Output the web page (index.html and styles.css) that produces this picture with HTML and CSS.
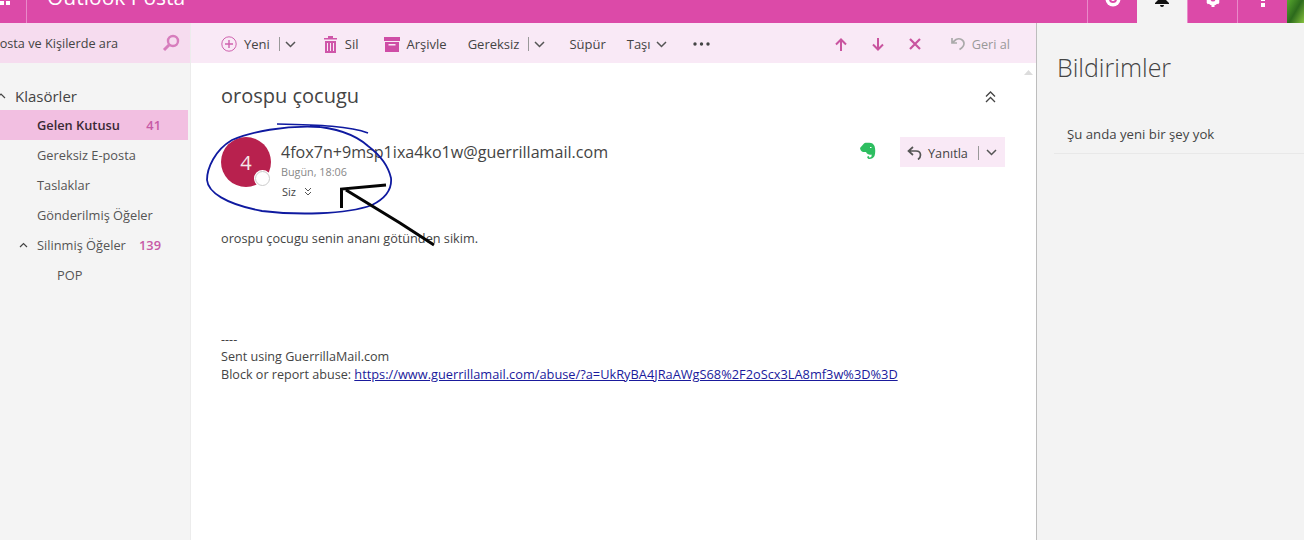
FILE: index.html
```html
<!DOCTYPE html>
<html lang="tr">
<head>
    <meta charset="UTF-8">
    <title>Outlook Posta</title>
    <link rel="stylesheet" href="styles.css">
</head>
<body>
    <div class="app">
        <header class="topbar">
            <div class="waffle"><span></span><span></span></div>
            <div class="brand">Outlook Posta</div>
            <div class="tile">
                <svg width="20" height="8" viewBox="0 0 20 8"><circle cx="10" cy="-1" r="7.500" fill="#fff"/><circle cx="10" cy="-1" r="3" fill="none" stroke="#dc4aa8" stroke-width="2"/></svg>
            </div>
            <div class="tile tile-active">
                <svg width="18" height="8" viewBox="0 0 18 8"><path d="M5-3h8v3l3 3v1H2V3l3-3zM7 5h4a2 2 0 0 1-4 0z" fill="#111"/></svg>
            </div>
            <div class="tile">
                <svg width="20" height="8" viewBox="0 0 20 8"><circle cx="10" cy="-1" r="4.500" fill="none" stroke="#fff" stroke-width="4"/><path d="M4 3l2-1M16 3l-2-1M10 4v3" stroke="#fff" stroke-width="3"/></svg>
            </div>
            <div class="tile">
                <svg width="6" height="8" viewBox="0 0 6 8"><rect x="1" y="0" width="4" height="1" fill="#fff"/><rect x="1" y="3" width="4" height="4" fill="#fff"/></svg>
            </div>
            <div class="photo"></div>
        </header>

        <div class="main">
            <aside class="sidebar">
                <div class="search">
                    <span class="search-text">Posta ve Kişilerde ara</span>
                    <svg width="20" height="20" viewBox="0 0 20 20"><circle cx="12" cy="8" r="5" fill="none" stroke="#d77dbd" stroke-width="2.400"/><path d="M8 12l-5 5" stroke="#d77dbd" stroke-width="3"/></svg>
                </div>
                <div class="folders-title">
                    <svg class="caret" width="10" height="6" viewBox="0 0 10 6"><path d="M1 5l4-4 4 4" fill="none" stroke="#444" stroke-width="1.200"/></svg>
                    Klasörler
                </div>
                <div class="folder folder-selected"><span>Gelen Kutusu</span><span class="count">41</span></div>
                <div class="folder"><span>Gereksiz E-posta</span></div>
                <div class="folder"><span>Taslaklar</span></div>
                <div class="folder"><span>Gönderilmiş Öğeler</span></div>
                <div class="folder">
                    <svg class="folder-caret" width="9" height="6" viewBox="0 0 9 6"><path d="M1 5l3.500-3.500L8 5" fill="none" stroke="#444" stroke-width="1.200"/></svg>
                    <span>Silinmiş Öğeler</span><span class="count">139</span>
                </div>
                <div class="folder folder-child"><span>POP</span></div>
            </aside>

            <section class="content">
                <nav class="toolbar">
                    <div class="tool tool-new">
                        <svg width="16" height="16" viewBox="0 0 16 16"><circle cx="8" cy="8" r="7.200" fill="none" stroke="#cf62ae" stroke-width="1"/><path d="M8 4v8M4 8h8" stroke="#cf62ae" stroke-width="1.400"/></svg>
                        <span>Yeni</span><i class="sep"></i>
                        <svg class="chev" width="11" height="7" viewBox="0 0 11 7"><path d="M1 1l4.500 4.500L10 1" fill="none" stroke="#555" stroke-width="1.500"/></svg>
                    </div>
                    <div class="tool tool-del">
                        <svg width="13" height="17" viewBox="0 0 13 17"><path d="M4 0h5v2h4v1.500H0V2h4zM1 5h11v12H1z" fill="#cf56a9"/><path d="M3.500 7v8M6.500 7v8M9.500 7v8" stroke="#f9e9f6" stroke-width="1"/></svg>
                        <span>Sil</span>
                    </div>
                    <div class="tool tool-arch">
                        <svg width="16" height="15" viewBox="0 0 16 15"><path d="M0 0h16v4H0zM1 5h14v10H1z" fill="#cf4da6"/><rect x="4.500" y="7" width="7" height="1.500" fill="#f9e9f6"/></svg>
                        <span>Arşivle</span>
                    </div>
                    <div class="tool tool-junk">
                        <span>Gereksiz</span><i class="sep"></i>
                        <svg class="chev" width="11" height="7" viewBox="0 0 11 7"><path d="M1 1l4.500 4.500L10 1" fill="none" stroke="#555" stroke-width="1.500"/></svg>
                    </div>
                    <div class="tool tool-sweep"><span>Süpür</span></div>
                    <div class="tool tool-move">
                        <span>Taşı</span>
                        <svg class="chev" width="11" height="7" viewBox="0 0 11 7"><path d="M1 1l4.500 4.500L10 1" fill="none" stroke="#555" stroke-width="1.500"/></svg>
                    </div>
                    <div class="tool tool-more">
                        <svg width="17" height="4" viewBox="0 0 17 4"><circle cx="2" cy="2" r="1.700" fill="#444"/><circle cx="8.500" cy="2" r="1.700" fill="#444"/><circle cx="15" cy="2" r="1.700" fill="#444"/></svg>
                    </div>
                    <div class="toolbar-right">
                        <svg width="12" height="13" viewBox="0 0 12 13"><path d="M6 13V2M1 6.500L6 1.500l5 5" fill="none" stroke="#c9549f" stroke-width="2"/></svg>
                        <svg width="12" height="13" viewBox="0 0 12 13"><path d="M6 0v11M1 6.500l5 5 5-5" fill="none" stroke="#c9549f" stroke-width="2"/></svg>
                        <svg width="12" height="12" viewBox="0 0 12 12"><path d="M1 1l10 10M11 1L1 11" stroke="#c9549f" stroke-width="2.200"/></svg>
                        <div class="undo">
                            <svg width="14" height="14" viewBox="0 0 14 14"><path d="M1 1v5h5M1.500 5.500L5 2.500c4-2 8 .5 8 4 0 2.500-2 4.500-4.500 6" fill="none" stroke="#aaa" stroke-width="1.700"/></svg>
                            <span>Geri al</span>
                        </div>
                    </div>
                </nav>

                <article class="message">
                    <div class="subject-row">
                        <h1 class="subject">orospu çocugu</h1>
                        <svg class="collapse" width="11" height="12" viewBox="0 0 11 12"><path d="M1 5.500l4.500-4.500L10 5.500M1 11l4.500-4.500L10 11" fill="none" stroke="#444" stroke-width="1.300"/></svg>
                    </div>
                    <div class="sender-row">
                        <div class="avatar">4<span class="presence"></span></div>
                        <div class="sender-info">
                            <div class="sender-name">4fox7n+9msp1ixa4ko1w@guerrillamail.com</div>
                            <div class="sender-date">Bugün, 18:06</div>
                            <div class="sender-to">Siz
                                <svg width="8" height="9" viewBox="0 0 8 9"><path d="M1 1l3 3 3-3M1 5l3 3 3-3" fill="none" stroke="#555" stroke-width="1"/></svg>
                            </div>
                        </div>
                        <svg class="evernote" width="16" height="18" viewBox="0 0 16 18"><path d="M0 6L4 1.500C6 .5 7 1 8 .8c3-.5 5.500.7 6.500 3.200 1 3 1 7 0 10-1 2-3 3-5 3-2 0-3-2-1.500-3 1 0 1.500 1 1 1.500 2 .5 3-1 2.500-3-2 .5-4.500 0-5.500-2.500C3 10.500 .5 9.500 0 6z" fill="#2dbe60"/><path d="M10 5.500h1.500" stroke="#fff" stroke-width="1"/></svg>
                        <div class="reply">
                            <svg width="15" height="14" viewBox="0 0 15 14"><path d="M6 1L1.500 5 6 9M2 5h7c3 0 4.500 2 4.500 4 0 2-1 3.500-2.500 4.500" fill="none" stroke="#555" stroke-width="1.700"/></svg>
                            <span>Yanıtla</span><i class="sep"></i>
                            <svg class="chev" width="11" height="7" viewBox="0 0 11 7"><path d="M1 1l4.500 4.500L10 1" fill="none" stroke="#555" stroke-width="1.500"/></svg>
                        </div>
                    </div>
                    <p class="body-text">orospu çocugu senin ananı götünden sikim.</p>
                    <p class="signature">----<br>Sent using GuerrillaMail.com<br>Block or report abuse: <a href="#">https://www.guerrillamail.com/abuse/?a=UkRyBA4JRaAWgS68%2F2oScx3LA8mf3w%3D%3D</a></p>
                </article>
                <svg class="scroll-arrow" width="9" height="6" viewBox="0 0 9 6"><path d="M0 6l4.500-5L9 6z" fill="#dcdcdc"/></svg>
            </section>

            <aside class="notifications">
                <h2>Bildirimler</h2>
                <div class="notice">Şu anda yeni bir şey yok</div>
            </aside>
        </div>

        <svg class="scribble" width="1304" height="540" viewBox="0 0 1304 540">
            <path d="M368 133C350 126 320 125 277 124" fill="none" stroke="#0f1aa0" stroke-width="1.600"/>
            <path d="M320 127C285 125 250 132 232 140C215 150 207 168 207 180C208 192 225 204 262 211C295 215 345 215 372 205C386 198 392 188 391 178C388 165 380 155 368 146C358 137 340 128 310 126" fill="none" stroke="#0f1aa0" stroke-width="1.800"/>
            <path d="M341.500 208V189L386 185M346 190L400 223L434 245" fill="none" stroke="#050505" stroke-width="3"/>
        </svg>
    </div>
</body>
</html>
```

FILE: styles.css
```css
* {
    box-sizing: border-box;
}

body {
    margin: 0;
    font-family: "Open Sans", "Noto Sans", sans-serif;
    font-size: 12.700px;
    color: #444;
    background: #fff;
    overflow: hidden;
}

.app {
    position: relative;
    width: 1304px;
    height: 540px;
    display: flex;
    flex-direction: column;
    overflow: hidden;
}

.topbar {
    height: 23px;
    flex: none;
    display: flex;
    background: #dc4aa8;
    color: #fff;
    overflow: hidden;
}

.waffle {
    width: 27px;
    flex: none;
    border-right: 1px solid #e98aca;
    display: flex;
    gap: 2px;
    padding-top: 1px;
}

.waffle span {
    width: 4px;
    height: 4px;
    background: #fff;
}

.brand {
    flex: 1;
    padding-left: 20px;
    margin-top: -17px;
    font-size: 21px;
    line-height: 28px;
}

.tile {
    width: 50px;
    flex: none;
    display: flex;
    justify-content: center;
    align-items: flex-start;
    border-left: 1px solid #e98aca;
}

.tile-active {
    background: #f3f3f3;
    border-left: none;
}

.photo {
    width: 17px;
    flex: none;
    background: linear-gradient(120deg, #58a82e, #2c6a1c 50%, #86c23e);
}

.main {
    flex: 1;
    display: flex;
    min-height: 0;
}

.sidebar {
    width: 191px;
    flex: none;
    background: #f4f4f4;
    overflow: hidden;
    border-right: 1px solid #ececec;
}

.search {
    height: 40px;
    display: flex;
    align-items: center;
    justify-content: space-between;
    background: #f6dcef;
    padding-right: 9px;
}

.search-text {
    margin-left: -8px;
    color: #444;
}

.folders-title {
    height: 47px;
    padding-top: 18px;
    display: flex;
    align-items: center;
    font-size: 15px;
    color: #444;
    position: relative;
    padding-left: 15px;
}

.caret {
    position: absolute;
    left: -4px;
    top: 30px;
}

.folder {
    height: 30px;
    display: flex;
    align-items: center;
    padding-left: 37px;
    padding-right: 27px;
    position: relative;
    width: 188px;
    font-size: 12.800px;
    color: #555;
}

.folder-selected {
    background: #f2bfe1;
    color: #3a2a35;
    font-weight: 600;
}

.folder-child {
    padding-left: 57px;
}

.folder-caret {
    position: absolute;
    left: 19px;
    top: 12px;
}

.count {
    margin-left: auto;
    color: #c75aa6;
    font-weight: 600;
}

.content {
    flex: 1;
    min-width: 0;
    display: flex;
    flex-direction: column;
    position: relative;
}

.toolbar {
    height: 40px;
    flex: none;
    display: flex;
    align-items: center;
    background: #f9e9f6;
    padding: 2px 0 0 30px;
    font-size: 13px;
    color: #444;
}

.tool {
    display: flex;
    align-items: center;
}

.sep {
    width: 1px;
    height: 14px;
    background: #999;
    margin: 0 5px 0 9px;
}

.tool-new span {
    margin-left: 7px;
}

.tool-del {
    margin-left: 28px;
}

.tool-del span {
    margin-left: 8px;
}

.tool-arch {
    margin-left: 25px;
}

.tool-arch span {
    margin-left: 7px;
}

.tool-junk {
    margin-left: 21px;
}

.tool-sweep {
    margin-left: 24px;
}

.tool-move {
    margin-left: 21px;
}

.tool-move .chev {
    margin-left: 5px;
}

.tool-more {
    margin-left: 26px;
}

.toolbar-right {
    margin-left: auto;
    display: flex;
    align-items: center;
    gap: 25px;
    padding-right: 26px;
}

.undo {
    display: flex;
    align-items: center;
    gap: 7px;
    color: #999;
    font-size: 12.700px;
    margin-left: 5px;
}

.message {
    flex: 1;
    padding: 0 31px 0 30px;
}

.subject-row {
    height: 66px;
    display: flex;
    align-items: center;
    justify-content: space-between;
    padding-right: 9px;
}

.subject {
    margin: 0 0 2px;
    font-size: 20px;
    font-weight: 400;
    color: #444;
}

.collapse {
    margin-top: 2px;
}

.sender-row {
    display: flex;
    align-items: flex-start;
    margin-top: 8px;
}

.avatar {
    width: 50px;
    height: 50px;
    flex: none;
    border-radius: 50%;
    background: #b8214e;
    color: #f5e6ea;
    font-size: 20px;
    display: flex;
    align-items: center;
    justify-content: center;
    position: relative;
}

.presence {
    position: absolute;
    right: 1px;
    bottom: 1px;
    width: 15px;
    height: 15px;
    border-radius: 50%;
    background: #fff;
    border: 1px solid #ccc;
    box-shadow: 0 0 0 1px #fff;
}

.sender-info {
    margin-left: 10px;
    flex: 1;
}

.sender-name {
    font-size: 16.100px;
    line-height: 30px;
    color: #444;
}

.sender-date {
    font-size: 10.800px;
    line-height: 10px;
    color: #888;
}

.sender-to {
    font-size: 11px;
    line-height: 30px;
    color: #444;
    padding-left: 1px;
}

.sender-to svg {
    margin-left: 5px;
}

.evernote {
    margin-top: 5px;
    margin-right: 24px;
}

.reply {
    width: 105px;
    height: 30px;
    flex: none;
    display: flex;
    align-items: center;
    background: #f9e9f6;
    padding: 1px 0 0 7px;
}

.reply span {
    margin-left: 6px;
}

.reply .sep {
    margin: 0 7px 0 10px;
}

.body-text {
    margin: 23px 0 0;
    line-height: 17.500px;
    color: #444;
}

.signature {
    margin: 83px 0 0;
    font-size: 12.600px;
    line-height: 17.500px;
    color: #444;
}

.signature a {
    font-size: 12.800px;
    color: #1a1a9c;
}

.scroll-arrow {
    position: absolute;
    right: 3px;
    top: 46px;
}

.notifications {
    width: 268px;
    flex: none;
    background: #f3f3f3;
    border-left: 1px solid #bdbdbd;
    padding-left: 20px;
}

.notifications h2 {
    margin: 24px 0 0;
    font-size: 25px;
    line-height: 40px;
    font-weight: 300;
    color: #444;
}

.notice {
    margin: 34px 0 0 -3px;
    padding-left: 13px;
    height: 33px;
    line-height: 27px;
    font-size: 13.200px;
    border-bottom: 1px solid #e8e8e8;
}

.scribble {
    position: absolute;
    left: 0;
    top: 0;
    pointer-events: none;
}
```
